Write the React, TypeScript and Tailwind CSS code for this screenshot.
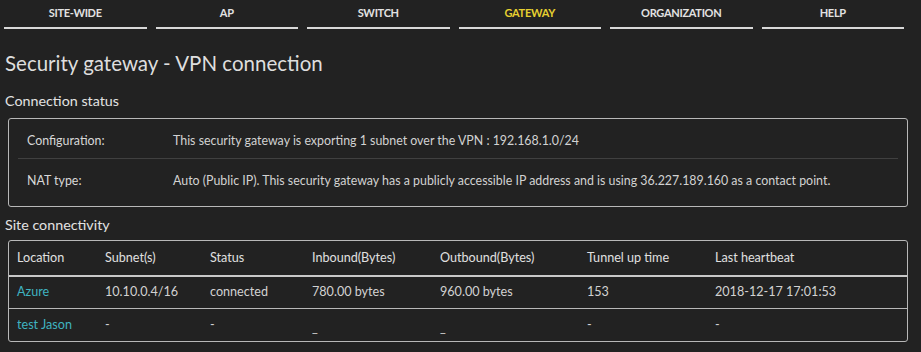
import React from "react";

const tabs = ["SITE-WIDE", "AP", "SWITCH", "GATEWAY", "ORGANIZATION", "HELP"];

const columns = [
  { label: "Location", w: "w-[88px]" },
  { label: "Subnet(s)", w: "w-[105px]" },
  { label: "Status", w: "w-[102px]" },
  { label: "Inbound(Bytes)", w: "w-[128px]" },
  { label: "Outbound(Bytes)", w: "w-[147px]" },
  { label: "Tunnel up time", w: "w-[128px]" },
  { label: "Last heartbeat", w: "flex-1" },
];

const sites = [
  {
    location: "Azure",
    cells: ["10.10.0.4/16", "connected", "780.00 bytes", "960.00 bytes", "153", "2018-12-17 17:01:53"],
    low: [false, false, false, false, false, false],
  },
  {
    location: "test Jason",
    cells: ["-", "-", "_", "_", "-", "-"],
    low: [false, false, true, true, false, false],
  },
];

export default function App() {
  return (
    <div
      className="w-[921px] h-[352px] overflow-hidden bg-[#222222] text-[#d2d2d2]"
      style={{ fontFamily: "Lato, 'Noto Sans', sans-serif" }}
    >
      {/* top nav */}
      <nav className="flex gap-[9px] px-[4px] pr-[17px]">
        {tabs.map((t) => (
          <div
            key={t}
            className={
              "flex-1 text-center pt-[6px] pb-[8px] text-[11px] leading-[13px] font-bold tracking-[-0.3px] border-b-2 border-[#d8d8d8] " +
              (t === "GATEWAY" ? "text-[#e6d030]" : "text-[#e2e2e2]")
            }
          >
            {t}
          </div>
        ))}
      </nav>

      <h1 className="mt-[22px] pl-[5px] text-[20.5px] leading-[25px] text-[#dedede]">
        Security gateway - VPN connection
      </h1>

      <h2 className="mt-[16px] pl-[5px] text-[14.3px] leading-[18px] text-[#e2e2e2]">Connection status</h2>

      <div className="mt-[8px] ml-[8px] w-[900px] border border-[#b8b8b8] rounded-[3px] px-[9px] pt-[6px] pb-[3px] text-[12.4px]">
        <div className="flex items-center h-[34px] border-b border-[#404040]">
          <span className="w-[155px] pl-[9px] text-[#d8d8d8]">Configuration:</span>
          <span>This security gateway is exporting 1 subnet over the VPN : 192.168.1.0/24</span>
        </div>
        <div className="flex items-center h-[44px]">
          <span className="w-[155px] pl-[9px] text-[#d8d8d8]">NAT type:</span>
          <span>
            Auto (Public IP). This security gateway has a publicly accessible IP address and is using 36.227.189.160 as a
            contact point.
          </span>
        </div>
      </div>

      <h2 className="mt-[9px] pl-[5px] text-[14.3px] leading-[18px] text-[#e2e2e2]">Site connectivity</h2>

      <div className="mt-[6px] ml-[8px] w-[900px] border border-[#b8b8b8] rounded-[3px] text-[12.6px]">
        <div className="flex items-center h-[36px] px-[8px] border-b-2 border-[#c8c8c8] text-[#e0e0e0]">
          {columns.map((c) => (
            <span key={c.label} className={c.w}>
              {c.label}
            </span>
          ))}
        </div>
        {sites.map((s, i) => (
          <div
            key={s.location}
            className={"flex items-center h-[32px] px-[8px] " + (i === 0 ? "border-b border-[#b8b8b8]" : "")}
          >
            <span className="w-[88px] text-[#3fb3c0]">{s.location}</span>
            {s.cells.map((c, j) => (
              <span key={j} className={(columns[j + 1].w) + (s.low[j] ? " pt-[6px]" : "")}>
                {c}
              </span>
            ))}
          </div>
        ))}
      </div>
    </div>
  );
}
